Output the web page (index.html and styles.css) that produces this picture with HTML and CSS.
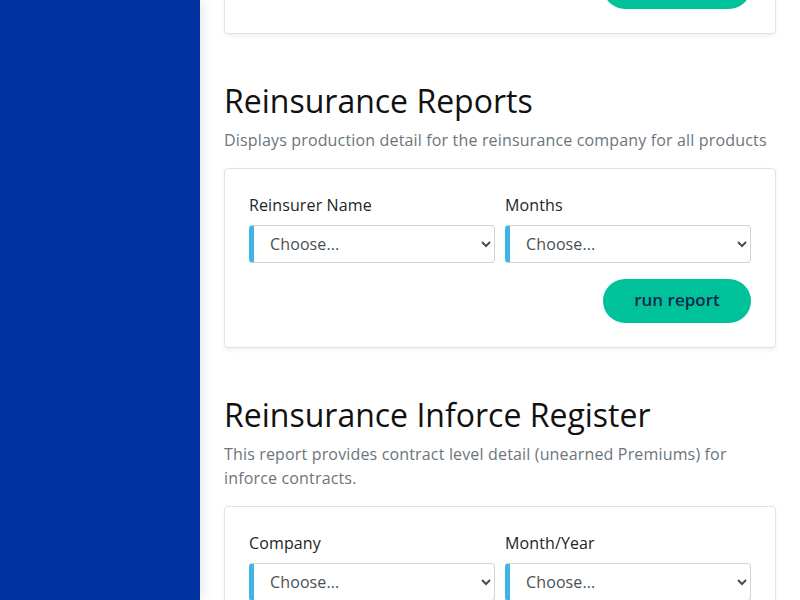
FILE: index.html
```html
<!DOCTYPE html>
<html lang="en">
<head>
<meta charset="utf-8">
<title>Reinsurance Reports</title>
<link rel="stylesheet" href="styles.css">
</head>
<body>
<div class="layout">
  <aside class="sidebar"></aside>
  <main class="main">
    <section class="report report-first">
      <div class="card card-partial">
        <div class="actions"><button class="btn">run report</button></div>
      </div>
    </section>

    <section class="report">
      <h2 class="title">Reinsurance Reports</h2>
      <p class="desc">Displays production detail for the reinsurance company for all products</p>
      <div class="card">
        <div class="fields">
          <div class="field">
            <label class="label">Reinsurer Name</label>
            <select class="select"><option>Choose...</option></select>
          </div>
          <div class="field">
            <label class="label">Months</label>
            <select class="select"><option>Choose...</option></select>
          </div>
        </div>
        <div class="actions"><button class="btn">run report</button></div>
      </div>
    </section>

    <section class="report">
      <h2 class="title">Reinsurance Inforce Register</h2>
      <p class="desc">This report provides contract level detail (unearned Premiums) for inforce contracts.</p>
      <div class="card">
        <div class="fields">
          <div class="field">
            <label class="label">Company</label>
            <select class="select"><option>Choose...</option></select>
          </div>
          <div class="field">
            <label class="label">Month/Year</label>
            <select class="select"><option>Choose...</option></select>
          </div>
        </div>
        <div class="actions"><button class="btn">run report</button></div>
      </div>
    </section>
  </main>
</div>
</body>
</html>
```

FILE: styles.css
```css
* { box-sizing: border-box; }
html, body {
  margin: 0;
  padding: 0;
  height: 100%;
  overflow: hidden;
  background: #fff;
  font-family: "Open Sans", "Liberation Sans", sans-serif;
  color: #212529;
}
.layout {
  display: flex;
  height: 600px;
  overflow: hidden;
}
.sidebar {
  flex: 0 0 200px;
  background: #0033a0;
  box-shadow: 2px 0 12px rgba(0, 51, 160, 0.12);
  position: relative;
  z-index: 1;
}
.main {
  flex: 1;
  padding: 0 24px;
  min-width: 0;
}
.report { margin-bottom: 48px; }
.report-first { margin-top: -35px; }
.title {
  margin: 0 0 8px;
  font-size: 32px;
  font-weight: 400;
  line-height: 38px;
  color: #111;
}
.desc {
  margin: 0 0 16px;
  font-size: 16px;
  font-weight: 400;
  letter-spacing: 0.16px;
  line-height: 24px;
  color: #6c757d;
}
.card {
  border: 1px solid #e2e2e2;
  border-radius: 4px;
  padding: 24px;
  background: #fff;
  box-shadow: 0 2px 5px rgba(0, 0, 0, 0.06);
}
.card.card-partial {
  padding-top: 0;
  border-top: none;
  border-radius: 0 0 4px 4px;
}
.fields {
  display: grid;
  grid-template-columns: 1fr 1fr;
  gap: 10px;
}
.field { display: flex; flex-direction: column; }
.label {
  font-size: 16px;
  line-height: 24px;
  letter-spacing: 0.12px;
  margin-bottom: 8px;
  color: #212529;
}
.select {
  height: 38px;
  font-family: inherit;
  font-size: 16px;
  letter-spacing: 0.12px;
  color: #495057;
  background: #fff;
  border: 1px solid #ced4da;
  border-left: 5px solid #3eb6e4;
  border-radius: 4px;
  padding: 0 8px 0 12px;
}
.actions {
  display: flex;
  justify-content: flex-end;
  margin-top: 16px;
}
.card-partial .actions { margin-top: 0; }
.btn {
  height: 44px;
  width: 148px;
  border: none;
  border-radius: 22px;
  background: #00c29a;
  color: #14284a;
  font-family: inherit;
  font-size: 17px;
  font-weight: 600;
  padding: 0 0 4px;
}
```
